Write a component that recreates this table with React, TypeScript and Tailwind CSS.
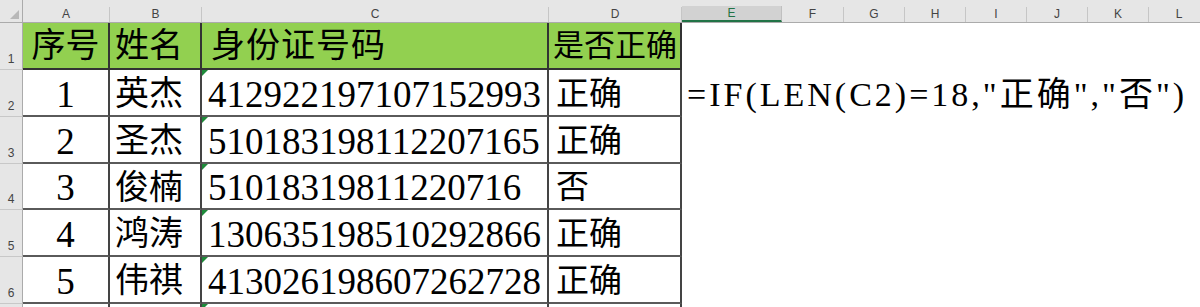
import React from "react";

const cols = [
  { l: "A", w: "w-[87px]" },
  { l: "B", w: "w-[92px]" },
  { l: "C", w: "w-[347px]" },
  { l: "D", w: "w-[133px]" },
  { l: "E", w: "w-[100px]", sel: true },
  { l: "F", w: "w-[62px]" },
  { l: "G", w: "w-[61px]" },
  { l: "H", w: "w-[61px]" },
  { l: "I", w: "w-[61px]" },
  { l: "J", w: "w-[61px]" },
  { l: "K", w: "w-[61px]" },
  { l: "L", w: "w-[61px]" },
];

const rows = [
  { n: "1", name: "英杰", id: "412922197107152993", ok: "正确", h: "h-[47px]" },
  { n: "2", name: "圣杰", id: "510183198112207165", ok: "正确", h: "h-[47px]" },
  { n: "3", name: "俊楠", id: "51018319811220716", ok: "否", h: "h-[46px]" },
  { n: "4", name: "鸿涛", id: "130635198510292866", ok: "正确", h: "h-[47px]" },
  { n: "5", name: "伟祺", id: "413026198607262728", ok: "正确", h: "h-[47px]" },
];

const serif = "font-['Liberation_Serif','Noto_Sans_CJK_SC',serif]";

function RowHead({ n }: { n: string }) {
  return (
    <div className="h-full w-[23px] shrink-0 bg-[#e6e6e6] border-r border-b border-r-[#ababab] border-b-[#c8c8c8] flex items-end justify-center pb-[4px] text-[12px] leading-none text-[#444] font-['Liberation_Sans',sans-serif]">
      {n}
    </div>
  );
}

function Tri() {
  return (
    <div className="absolute left-0 top-0 w-0 h-0 border-t-[6px] border-r-[6px] border-t-[#1e8a3a] border-r-transparent" />
  );
}

export default function App() {
  return (
    <div className="w-[1200px] h-[307px] overflow-hidden bg-white">
      {/* column header */}
      <div className="flex h-[23px] bg-[#e6e6e6] border-b border-[#ababab]">
        <div className="w-[23px] shrink-0 relative border-r border-[#ababab]">
          <div className="absolute right-[3px] bottom-[3px] w-0 h-0 border-b-[9px] border-l-[9px] border-b-[#b8b8b8] border-l-transparent" />
        </div>
        {cols.map((c) => (
          <div key={c.l} className={`${c.w} shrink-0 flex flex-col justify-end`}>
            {c.sel ? (
              <div className="h-[16px] bg-[#d2d2d2] border-r border-[#c0c0c0] border-b-2 border-b-[#217346] text-[#217346] text-[12px] leading-[14px] text-center font-['Liberation_Sans',sans-serif]">
                {c.l}
              </div>
            ) : (
              <div className="h-[15px] border-r border-[#c6c6c6] text-[#444] text-[12px] leading-[15px] text-center font-['Liberation_Sans',sans-serif]">
                {c.l}
              </div>
            )}
          </div>
        ))}
      </div>

      {/* row 1 header */}
      <div className="flex h-[47px] leading-none">
        <RowHead n="1" />
        <div className={`w-[87px] shrink-0 bg-[#92d050] border-r-2 border-b-2 border-[#333] flex items-center justify-center text-[34px] text-black ${serif}`}>
          序号
        </div>
        <div className={`w-[92px] shrink-0 bg-[#92d050] border-r-2 border-b-2 border-[#333] flex items-center pl-[5px] text-[34px] text-black ${serif}`}>
          姓名
        </div>
        <div className={`w-[347px] shrink-0 bg-[#92d050] border-r-2 border-b-2 border-[#333] flex items-center pl-[9px] text-[34px] tracking-[1px] text-black ${serif}`}>
          身份证号码
        </div>
        <div className={`w-[133px] shrink-0 bg-[#92d050] border-r-2 border-b-2 border-[#333] flex items-center pl-[4px] text-[31px] text-black whitespace-nowrap ${serif}`}>
          是否正确
        </div>
      </div>

      {rows.map((r, i) => (
        <div key={r.n} className={`flex ${r.h} leading-none`}>
          <RowHead n={String(i + 2)} />
          <div className={`w-[87px] shrink-0 border-r-2 border-b-2 border-r-[#444] border-b-[#5a5a5a] flex items-center justify-center pt-[3px] text-[37px] text-black ${serif}`}>
            {r.n}
          </div>
          <div className={`w-[92px] shrink-0 border-r-2 border-b-2 border-r-[#444] border-b-[#5a5a5a] flex items-center pl-[5px] pt-[3px] text-[34px] text-black ${serif}`}>
            {r.name}
          </div>
          <div className={`relative w-[347px] shrink-0 border-r-2 border-b-2 border-r-[#444] border-b-[#5a5a5a] flex items-center pl-[6px] pt-[3px] text-[37px] text-black ${serif}`}>
            <Tri />
            {r.id}
          </div>
          <div className={`w-[133px] shrink-0 border-r-2 border-b-2 border-r-[#444] border-b-[#5a5a5a] flex items-center pl-[7px] pt-[3px] text-[33px] text-black ${serif}`}>
            {r.ok}
          </div>
          {i === 0 && (
            <div className={`flex items-center pl-[5px] pt-[3px] whitespace-nowrap text-[34px] tracking-[3px] text-black ${serif}`}>
              =IF(LEN(C2)=18,"正确","否")
            </div>
          )}
        </div>
      ))}

      {/* partial row 7 */}
      <div className="flex h-[20px]">
        <RowHead n="" />
        <div className="w-[87px] shrink-0 border-r-2 border-[#444]" />
        <div className="w-[92px] shrink-0 border-r-2 border-[#444]" />
        <div className="relative w-[347px] shrink-0 border-r-2 border-[#444]">
          <Tri />
        </div>
        <div className="w-[133px] shrink-0 border-r-2 border-[#444]" />
      </div>
    </div>
  );
}
